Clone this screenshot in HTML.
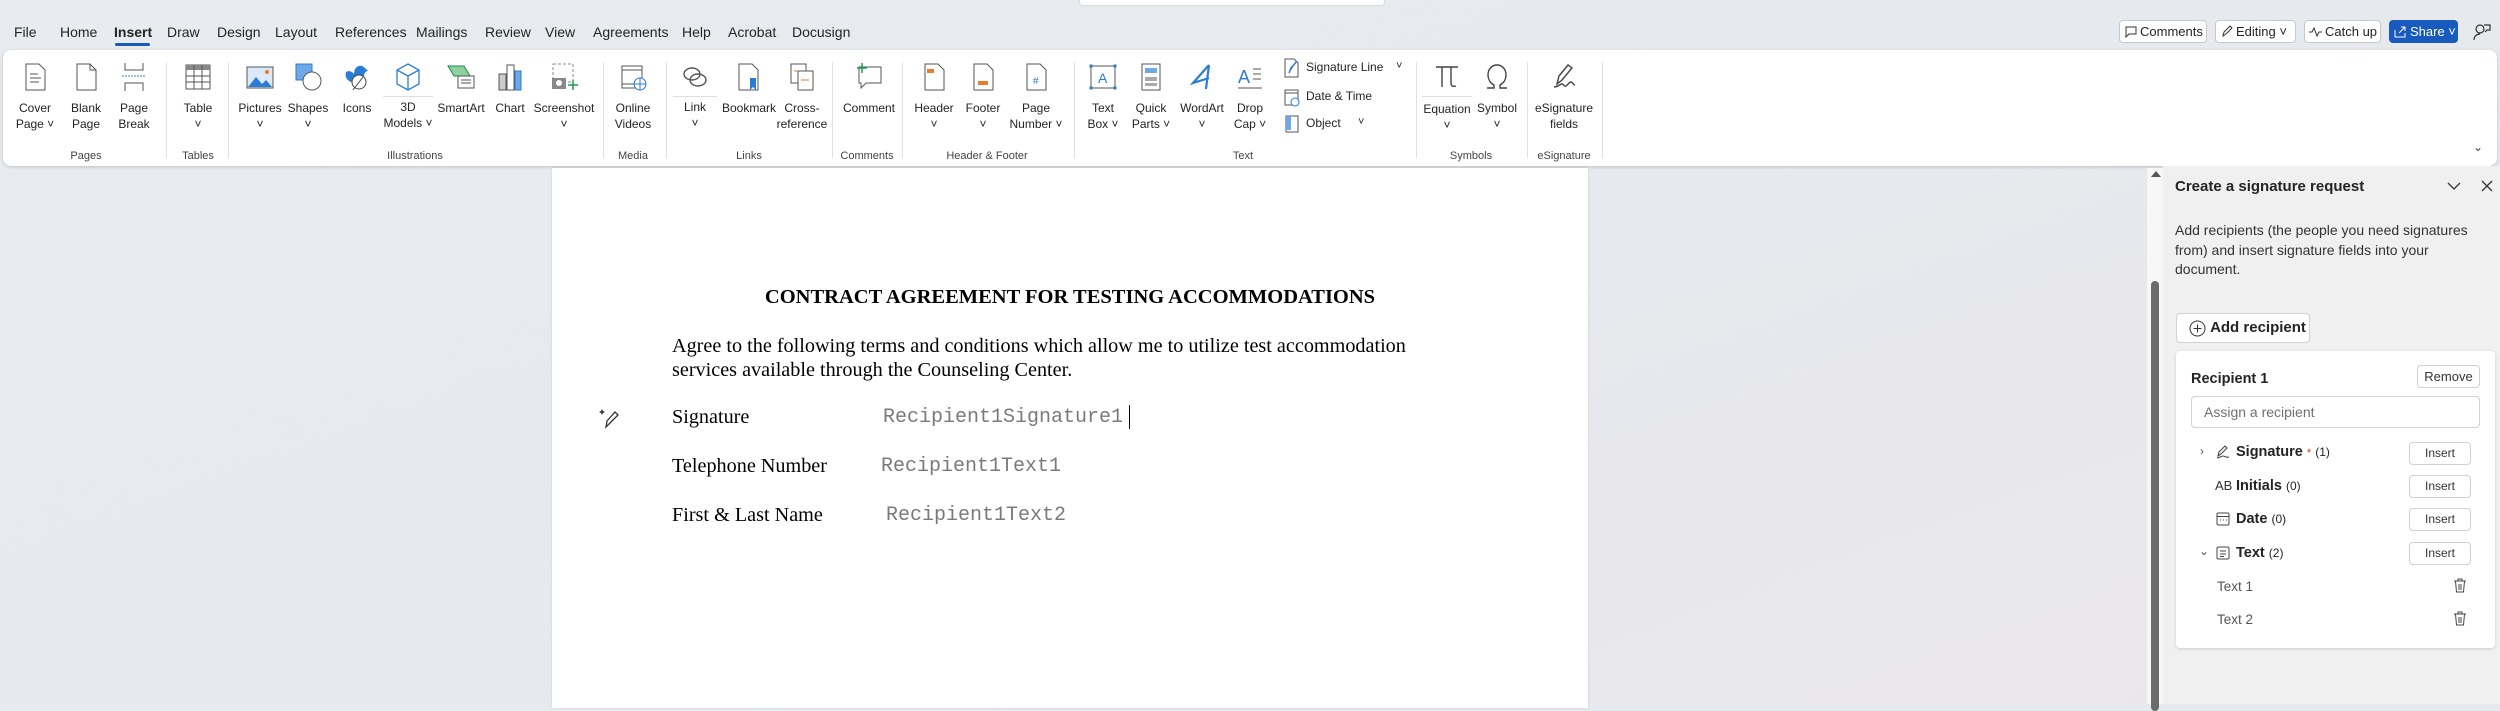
<!DOCTYPE html>
<html><head><meta charset="utf-8"><style>
*{margin:0;padding:0;box-sizing:border-box}
body{width:2500px;height:704px;overflow:hidden;position:relative;font-family:"Liberation Sans",sans-serif;background:linear-gradient(160deg,#e8ebef 0%,#e6e9ee 50%,#ebe7e9 100%);color:#242424}
.a{position:absolute;white-space:nowrap}
.tab{position:absolute;top:24px;font-size:14px;color:#242424}
.rib{position:absolute;left:3px;top:50px;width:2494px;height:116px;background:#fff;border-radius:8px;box-shadow:0 1px 3px rgba(0,0,0,.18)}
.b{position:absolute;top:0;width:70px;text-align:center;font-size:12px;line-height:16px;color:#242424}
.b svg{display:block;margin:12px auto 0;width:30px;height:30px}
.b .t{margin-top:8px}
.sep{position:absolute;top:12px;width:1px;height:96px;background:#e1e1e1}
.gl{position:absolute;top:100px;font-size:11px;color:#444;transform:translateX(-50%)}
.tb{position:absolute;top:20px;height:23px;border:1px solid #c8c8c8;border-radius:4px;background:#fff;font-size:13px;line-height:21px;padding-left:20px;color:#242424}
.pane{position:absolute;left:2163px;top:166px;width:337px;height:538px;background:#f0f0f0}
.btn{position:absolute;border:1px solid #d1d1d1;border-radius:4px;background:#fff;font-size:12px;text-align:center;color:#333}
.mono{font-family:"Liberation Mono",monospace;color:#7a7a7a;font-size:20px}
.ser{font-family:"Liberation Serif",serif;font-size:20.2px;color:#000}
</style></head><body>
<div class="a" style="left:1079px;top:0;width:306px;height:6px;background:#fff;border:1px solid #ddd;border-top:none;border-radius:0 0 4px 4px"></div>
<div class="tab" style="left:14px">File</div>
<div class="tab" style="left:60px">Home</div>
<div class="tab" style="left:114px;font-weight:bold">Insert</div>
<div class="a" style="left:115px;top:43px;width:35px;height:3px;background:#185abd;border-radius:2px"></div>
<div class="tab" style="left:167px">Draw</div>
<div class="tab" style="left:217px">Design</div>
<div class="tab" style="left:275px">Layout</div>
<div class="tab" style="left:335px">References</div>
<div class="tab" style="left:416px">Mailings</div>
<div class="tab" style="left:485px">Review</div>
<div class="tab" style="left:545px">View</div>
<div class="tab" style="left:593px">Agreements</div>
<div class="tab" style="left:682px">Help</div>
<div class="tab" style="left:728px">Acrobat</div>
<div class="tab" style="left:792px">Docusign</div>

<div class="tb" style="left:2119px;width:88px">Comments<svg class="a" style="left:5px;top:5px" width="12" height="12" viewBox="0 0 12 12"><path d="M1 1h10v7H4l-3 3z" fill="none" stroke="#333"/></svg></div>
<div class="tb" style="left:2215px;width:81px">Editing ˅<svg class="a" style="left:5px;top:4px" width="12" height="13" viewBox="0 0 12 13"><path d="M2 11l1-4 6-6 2 2-6 6z" fill="none" stroke="#333"/></svg></div>
<div class="tb" style="left:2304px;width:77px">Catch up<svg class="a" style="left:4px;top:6px" width="14" height="10" viewBox="0 0 14 10"><path d="M0 5h3l2-4 3 8 2-4h3" fill="none" stroke="#333"/></svg></div>
<div class="tb" style="left:2389px;width:69px;background:#185abd;border-color:#185abd;color:#fff">Share ˅<svg class="a" style="left:4px;top:4px" width="13" height="13" viewBox="0 0 13 13"><path d="M1 5v7h10V8M5 8l6-6M7 2h4v4" fill="none" stroke="#fff"/></svg></div>
<svg class="a" style="left:2473px;top:22px" width="18" height="20" viewBox="0 0 18 20"><circle cx="7" cy="7" r="4" fill="none" stroke="#333" stroke-width="1.2"/><path d="M1 18c0-4 3-6 6-6M11 3h6v5h-3l-2 2" fill="none" stroke="#333" stroke-width="1.2"/></svg>

<div class="rib">
<div class="b" style="left:-3px"><svg viewBox="0 0 30 30"><path d="M6 2h13l6 6v20H6z" fill="#fff" stroke="#555"/><path d="M10 12h8M10 16h11M10 20h9" stroke="#555"/></svg><div class="t">Cover<br>Page ˅</div></div>
<div class="b" style="left:48px"><svg viewBox="0 0 30 30"><path d="M6 2h13l6 6v20H6z" fill="#fff" stroke="#555"/><path d="M19 2v6h6" fill="none" stroke="#555"/></svg><div class="t">Blank<br>Page</div></div>
<div class="b" style="left:96px"><svg viewBox="0 0 30 30"><path d="M6 1v7h18V1M6 29v-8h18v8" fill="none" stroke="#555"/><path d="M3 14h24" stroke="#2b7cd3" stroke-dasharray="2 1"/></svg><div class="t">Page<br>Break</div></div>
<div class="sep" style="left:163px"></div>
<div class="b" style="left:160px"><svg viewBox="0 0 30 30"><rect x="3" y="3" width="24" height="24" fill="#fff" stroke="#555"/><rect x="3" y="3" width="24" height="5" fill="#888"/><path d="M3 14h24M3 20h24M11 3v24M19 3v24" stroke="#555"/></svg><div class="t">Table<br>˅</div></div>
<div class="sep" style="left:225px"></div>
<div class="b" style="left:222px"><svg viewBox="0 0 30 30"><rect x="2" y="5" width="26" height="21" fill="#dbe9f8" stroke="#555"/><path d="M3 25l8-10 6 7 4-4 6 7z" fill="#2b7cd3"/><circle cx="22" cy="10" r="2" fill="#e87b2c"/></svg><div class="t">Pictures<br>˅</div></div>
<div class="b" style="left:270px"><svg viewBox="0 0 30 30"><rect x="3" y="2" width="16" height="16" fill="#6ea8e6" stroke="#2b7cd3"/><circle cx="19" cy="19" r="9" fill="#fff" stroke="#555"/></svg><div class="t">Shapes<br>˅</div></div>
<div class="b" style="left:319px"><svg viewBox="0 0 30 30"><path d="M4 10c4-2 6 0 8 2 0-6 4-9 8-8 3 1 4 4 6 4-2 2-4 3-4 6 0 6-8 8-13 6C4 18 3 14 4 10z" fill="#2b7cd3"/><ellipse cx="17" cy="20" rx="7" ry="7" fill="#fff" stroke="#444"/><path d="M11 28l10-13" stroke="#444"/></svg><div class="t">Icons</div></div>
<div class="b" style="left:370px"><svg viewBox="0 0 30 30"><path d="M15 2l11 6v14l-11 6-11-6V8z M4 8l11 6 11-6M15 14v14" fill="none" stroke="#2b7cd3" stroke-width="1.3"/></svg><div style="margin:4px auto 0;width:50px;border-top:1px solid #ddd;padding-top:2px">3D<br>Models ˅</div></div>
<div class="b" style="left:423px"><svg viewBox="0 0 30 30"><path d="M2 4h16l6 10H8z" fill="#8ed1a0" stroke="#1f8a4c"/><rect x="12" y="14" width="16" height="12" fill="#fff" stroke="#555"/><path d="M15 18h10M15 21h10" stroke="#555"/></svg><div class="t">SmartArt</div></div>
<div class="b" style="left:472px"><svg viewBox="0 0 30 30"><rect x="4" y="12" width="7" height="16" fill="#ccc" stroke="#555"/><rect x="12" y="3" width="7" height="25" fill="#fff" stroke="#555"/><rect x="20" y="9" width="6" height="19" fill="#6ea8e6" stroke="#2b7cd3"/></svg><div class="t">Chart</div></div>
<div class="b" style="left:526px"><svg viewBox="0 0 30 30"><rect x="4" y="2" width="20" height="18" fill="none" stroke="#888" stroke-dasharray="3 2"/><rect x="3" y="16" width="14" height="11" fill="#888"/><circle cx="10" cy="21" r="3" fill="#fff"/><path d="M24 18v10M19 23h10" stroke="#1f9e4c" stroke-width="1.5"/></svg><div class="t">Screenshot<br>˅</div></div>
<div class="sep" style="left:600px"></div>
<div class="gl" style="left:83px">Pages</div>
<div class="gl" style="left:195px">Tables</div>
<div class="gl" style="left:412px">Illustrations</div>
<div class="b" style="left:595px"><svg viewBox="0 0 30 30"><rect x="4" y="4" width="20" height="22" fill="#fff" stroke="#555"/><path d="M4 8h20M4 22h20" stroke="#555"/><circle cx="22" cy="22" r="6" fill="#fff" stroke="#2b7cd3"/><path d="M16 22h12M22 16v12" stroke="#2b7cd3"/></svg><div class="t">Online<br>Videos</div></div>
<div class="sep" style="left:663px"></div>
<div class="gl" style="left:630px">Media</div>
<div class="b" style="left:657px"><svg viewBox="0 0 30 30"><ellipse cx="12" cy="12" rx="8" ry="6" fill="none" stroke="#555" stroke-width="1.4"/><ellipse cx="18" cy="18" rx="8" ry="6" fill="none" stroke="#555" stroke-width="1.4"/></svg><div style="margin:4px auto 0;width:44px;border-top:1px solid #ddd;padding-top:2px">Link<br>˅</div></div>
<div class="b" style="left:711px"><svg viewBox="0 0 30 30"><path d="M5 2h13l6 6v20H5z" fill="#fff" stroke="#555"/><path d="M16 16h6v12l-3-3-3 3z" fill="#2b7cd3"/></svg><div class="t">Bookmark</div></div>
<div class="b" style="left:764px"><svg viewBox="0 0 30 30"><rect x="4" y="2" width="15" height="19" fill="#fff" stroke="#555"/><rect x="11" y="9" width="15" height="19" fill="#fff" stroke="#555"/><path d="M14 18h8M7 9h3" stroke="#e87b2c"/></svg><div class="t">Cross-<br>reference</div></div>
<div class="sep" style="left:829px"></div>
<div class="gl" style="left:746px">Links</div>
<div class="b" style="left:831px"><svg viewBox="0 0 30 30"><path d="M5 5h22v16H12l-5 5v-5H5z" fill="#fff" stroke="#555"/><path d="M8 1v10M3 6h10" stroke="#1f9e4c" stroke-width="1.5"/></svg><div class="t">Comment</div></div>
<div class="sep" style="left:899px"></div>
<div class="gl" style="left:864px">Comments</div>
<div class="b" style="left:896px"><svg viewBox="0 0 30 30"><path d="M6 2h13l6 6v20H6z" fill="#fff" stroke="#555"/><rect x="8" y="7" width="7" height="4" fill="#e87b2c"/></svg><div class="t">Header<br>˅</div></div>
<div class="b" style="left:945px"><svg viewBox="0 0 30 30"><path d="M6 2h13l6 6v20H6z" fill="#fff" stroke="#555"/><rect x="10" y="19" width="10" height="4" fill="#e87b2c"/></svg><div class="t">Footer<br>˅</div></div>
<div class="b" style="left:998px"><svg viewBox="0 0 30 30"><path d="M6 2h13l6 6v20H6z" fill="#fff" stroke="#555"/><text x="12" y="22" font-size="10" fill="#2b7cd3" font-family="Liberation Sans">#</text></svg><div class="t">Page<br>Number ˅</div></div>
<div class="sep" style="left:1071px"></div>
<div class="gl" style="left:984px">Header &amp; Footer</div>
<div class="b" style="left:1065px"><svg viewBox="0 0 30 30"><rect x="3" y="4" width="24" height="22" fill="#fff" stroke="#555"/><g fill="#2b7cd3"><rect x="1.5" y="2.5" width="3" height="3"/><rect x="25.5" y="2.5" width="3" height="3"/><rect x="1.5" y="24.5" width="3" height="3"/><rect x="25.5" y="24.5" width="3" height="3"/></g><text x="10" y="21" font-size="14" fill="#2b7cd3" font-family="Liberation Sans">A</text></svg><div class="t">Text<br>Box ˅</div></div>
<div class="b" style="left:1113px"><svg viewBox="0 0 30 30"><rect x="6" y="2" width="18" height="26" fill="#fff" stroke="#555"/><rect x="9" y="6" width="12" height="5" fill="#6ea8e6"/><rect x="9" y="15" width="12" height="4" fill="#aaa"/><rect x="9" y="21" width="12" height="3" fill="#aaa"/></svg><div class="t">Quick<br>Parts ˅</div></div>
<div class="b" style="left:1164px"><svg viewBox="0 0 30 30"><path d="M22 3L6 21l16-5M22 3l-3 24" fill="none" stroke="#2b7cd3" stroke-width="2.2"/></svg><div class="t">WordArt<br>˅</div></div>
<div class="b" style="left:1212px"><svg viewBox="0 0 30 30"><text x="3" y="21" font-size="18" fill="#2b7cd3" font-family="Liberation Sans">A</text><path d="M18 7h8M18 12h8M18 17h8M3 26h24" stroke="#555"/></svg><div class="t">Drop<br>Cap ˅</div></div>
<svg class="a" style="left:1280px;top:8px" width="18" height="20" viewBox="0 0 18 20"><path d="M2 1h9l4 4v14H2z" fill="#fff" stroke="#555"/><path d="M6 15l2-5 6-7" stroke="#2b7cd3" stroke-width="1.5"/></svg>
<div class="a" style="left:1303px;top:10px;font-size:12px">Signature Line</div><div class="a" style="left:1393px;top:10px;font-size:11px">˅</div>
<svg class="a" style="left:1280px;top:37px" width="18" height="20" viewBox="0 0 18 20"><rect x="2" y="3" width="13" height="15" fill="#fff" stroke="#555"/><path d="M2 6h13" stroke="#555"/><circle cx="12" cy="15" r="4" fill="#fff" stroke="#2b7cd3"/></svg>
<div class="a" style="left:1303px;top:39px;font-size:12px">Date &amp; Time</div>
<svg class="a" style="left:1280px;top:64px" width="18" height="20" viewBox="0 0 18 20"><rect x="3" y="2" width="12" height="16" fill="#fff" stroke="#555"/><rect x="3" y="2" width="5" height="14" fill="#6ea8e6"/></svg>
<div class="a" style="left:1303px;top:66px;font-size:12px">Object</div><div class="a" style="left:1355px;top:66px;font-size:11px">˅</div>
<div class="sep" style="left:1413px"></div>
<div class="gl" style="left:1240px">Text</div>
<div class="b" style="left:1409px"><svg viewBox="0 0 30 30"><path d="M4 5h22M10 5v20M19 5v16c0 3 2 4 5 3" fill="none" stroke="#444" stroke-width="1.4"/></svg><div style="margin:4px auto 0;width:50px;border-top:1px solid #ddd;padding-top:4px">Equation<br>˅</div></div>
<div class="b" style="left:1459px"><svg viewBox="0 0 30 30"><path d="M5 26h7v-3c-4-2-6-6-6-10 0-6 4-10 9-10s9 4 9 10c0 4-2 8-6 10v3h7" fill="none" stroke="#444" stroke-width="1.4"/></svg><div class="t">Symbol<br>˅</div></div>
<div class="sep" style="left:1524px"></div>
<div class="gl" style="left:1468px">Symbols</div>
<div class="b" style="left:1526px"><svg viewBox="0 0 30 30"><path d="M8 22l2-8 9-11 4 3-10 12z M5 25c4 0 6-3 8-3s2 3 4 2 3-4 5-4 2 3 4 3" fill="none" stroke="#444" stroke-width="1.4"/></svg><div class="t">eSignature<br>fields</div></div>
<div class="sep" style="left:1599px"></div>
<div class="gl" style="left:1561px">eSignature</div>
<div class="a" style="left:2470px;top:90px;font-size:12px;color:#444">⌄</div>
</div>

<div class="a" style="left:552px;top:168px;width:1036px;height:540px;background:#fff;box-shadow:0 0 2px rgba(0,0,0,.15)"></div>
<div class="a ser" style="left:552px;width:1036px;top:286px;text-align:center;font-weight:bold;font-size:20.5px">CONTRACT AGREEMENT FOR TESTING ACCOMMODATIONS</div>
<div class="a ser" style="left:672px;top:334px;line-height:24px">Agree to the following terms and conditions which allow me to utilize test accommodation<br>services available through the Counseling Center.</div>
<svg class="a" style="left:598px;top:406px" width="24" height="24" viewBox="0 0 24 24"><path d="M8 21l1-6 8-9 3 3-8 8z" fill="none" stroke="#333" stroke-width="1.3"/><path d="M4 3l1 2 2 1-2 1-1 2-1-2-2-1 2-1z" fill="#333"/></svg>
<div class="a ser" style="left:672px;top:406px">Signature</div>
<div class="a mono" style="left:883px;top:406px">Recipient1Signature1</div>
<div class="a" style="left:1129px;top:405px;width:1px;height:24px;background:#000"></div>
<div class="a ser" style="left:672px;top:455px">Telephone Number</div>
<div class="a mono" style="left:881px;top:455px">Recipient1Text1</div>
<div class="a ser" style="left:672px;top:504px">First &amp; Last Name</div>
<div class="a mono" style="left:886px;top:504px">Recipient1Text2</div>

<div class="a" style="left:2147px;top:168px;width:16px;height:536px;background:#f7f7f7"></div>
<div class="a" style="left:2151px;top:171px;width:0;height:0;border-left:5px solid transparent;border-right:5px solid transparent;border-bottom:6px solid #555"></div>
<div class="a" style="left:2151px;top:281px;width:8px;height:430px;background:#6b6b6b;border-radius:4px"></div>

<div class="pane"></div>
<div class="a" style="left:2175px;top:178px;font-size:15px;font-weight:bold;color:#242424">Create a signature request</div>
<svg class="a" style="left:2447px;top:181px" width="14" height="10" viewBox="0 0 14 10"><path d="M1 2l6 6 6-6" fill="none" stroke="#333" stroke-width="1.3"/></svg>
<svg class="a" style="left:2481px;top:180px" width="12" height="12" viewBox="0 0 12 12"><path d="M1 1l10 10M11 1L1 11" stroke="#333" stroke-width="1.3"/></svg>
<div class="a" style="left:2175px;top:221px;font-size:14px;line-height:19.7px;color:#333">Add recipients (the people you need signatures<br>from) and insert signature fields into your<br>document.</div>
<div class="btn" style="left:2176px;top:313px;width:134px;height:30px;font-size:15px;font-weight:bold;line-height:28px;padding-left:30px;color:#242424">Add recipient<svg class="a" style="left:12px;top:6px" width="17" height="17" viewBox="0 0 17 17"><circle cx="8.5" cy="8.5" r="7.5" fill="none" stroke="#333"/><path d="M8.5 4.5v8M4.5 8.5h8" stroke="#333"/></svg></div>
<div class="a" style="left:2176px;top:351px;width:319px;height:297px;background:#fff;border-radius:4px;box-shadow:0 1px 3px rgba(0,0,0,.15)"></div>
<div class="a" style="left:2191px;top:371px;font-size:14.5px;font-weight:bold">Recipient 1</div>
<div class="btn" style="left:2417px;top:365px;width:63px;height:23px;line-height:21px;font-size:13px">Remove</div>
<div class="a" style="left:2191px;top:396px;width:289px;height:32px;border:1px solid #d1d1d1;border-radius:4px;background:#fff"></div>
<div class="a" style="left:2204px;top:404px;font-size:14px;color:#707070">Assign a recipient</div>

<div class="a" style="left:2200px;top:444px;font-size:12px;color:#555">›</div>
<svg class="a" style="left:2215px;top:444px" width="16" height="16" viewBox="0 0 16 16"><path d="M3 12l1-4 6-6 2 2-6 6z M2 14c3 0 4-2 6-2s2 2 6 1" fill="none" stroke="#444" stroke-width="1.1"/></svg>
<div class="a" style="left:2236px;top:444px;font-size:14.5px;font-weight:bold">Signature <span style="color:#d83b01;font-weight:normal;font-size:11px">*</span> <span style="font-weight:normal;font-size:12px">(1)</span></div>
<div class="a" style="left:2215px;top:478px;font-size:13px;color:#333">AB</div>
<div class="a" style="left:2236px;top:478px;font-size:14.5px;font-weight:bold">Initials <span style="font-weight:normal;font-size:12px">(0)</span></div>
<svg class="a" style="left:2216px;top:512px" width="14" height="14" viewBox="0 0 14 14"><rect x="1" y="1" width="12" height="12" rx="1.5" fill="none" stroke="#444"/><path d="M1 4.5h12M4 8h1M7 8h1M10 8h1" stroke="#444"/></svg>
<div class="a" style="left:2236px;top:511px;font-size:14.5px;font-weight:bold">Date <span style="font-weight:normal;font-size:12px">(0)</span></div>
<div class="a" style="left:2199px;top:544px;font-size:12px;color:#555">⌄</div>
<svg class="a" style="left:2216px;top:546px" width="14" height="14" viewBox="0 0 14 14"><rect x="1" y="1" width="12" height="12" rx="1.5" fill="none" stroke="#444"/><path d="M4 5h6M4 8h6M4 10.5h4" stroke="#444"/></svg>
<div class="a" style="left:2236px;top:545px;font-size:14.5px;font-weight:bold">Text <span style="font-weight:normal;font-size:12px">(2)</span></div>
<div class="btn" style="left:2409px;top:442px;width:62px;height:23px;line-height:21px">Insert</div>
<div class="btn" style="left:2409px;top:475px;width:62px;height:23px;line-height:21px">Insert</div>
<div class="btn" style="left:2409px;top:508px;width:62px;height:23px;line-height:21px">Insert</div>
<div class="btn" style="left:2409px;top:542px;width:62px;height:23px;line-height:21px">Insert</div>
<div class="a" style="left:2217px;top:579px;font-size:13.5px;color:#555">Text 1</div>
<div class="a" style="left:2217px;top:612px;font-size:13.5px;color:#555">Text 2</div>
<svg class="a" style="left:2453px;top:578px" width="14" height="15" viewBox="0 0 14 15"><path d="M1 3h12M5 3V1h4v2M2.5 3l1 11h7l1-11M6 6v6M8 6v6" fill="none" stroke="#444"/></svg>
<svg class="a" style="left:2453px;top:611px" width="14" height="15" viewBox="0 0 14 15"><path d="M1 3h12M5 3V1h4v2M2.5 3l1 11h7l1-11M6 6v6M8 6v6" fill="none" stroke="#444"/></svg>
</body></html>
